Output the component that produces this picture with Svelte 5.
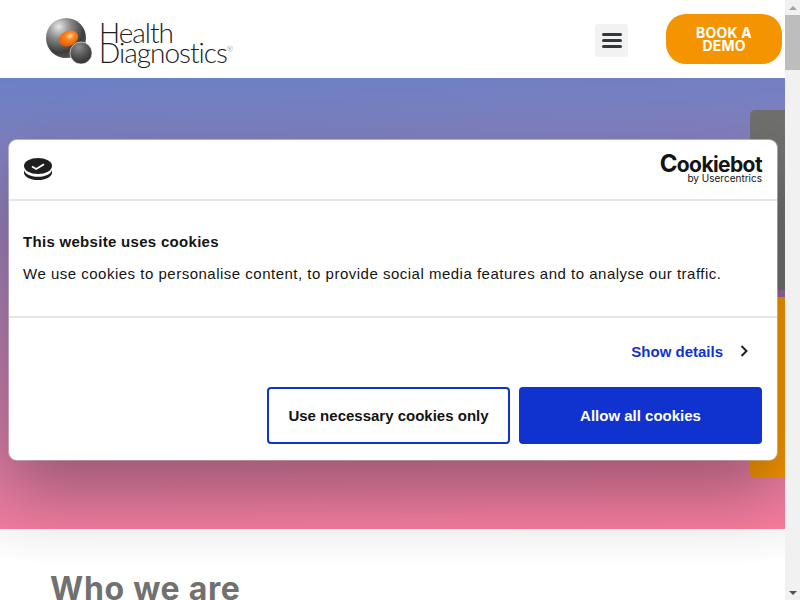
<script>
  let tabs = [
    { name: 'grey', height: 180 },
    { name: 'purple', height: 7 },
    { name: 'orange', height: 181 }
  ];
</script>

<div class="page">
  <div class="main">
    <header class="topbar">
      <a class="logo" href="#top">
        <svg class="orb" width="48" height="48" viewBox="0 0 48 48">
          <defs>
            <radialGradient id="big" cx="0.32" cy="0.22" r="0.85">
              <stop offset="0" stop-color="#e8e8e8" />
              <stop offset="0.35" stop-color="#8a8a8a" />
              <stop offset="0.75" stop-color="#3c3c3c" />
              <stop offset="1" stop-color="#5a5a5a" />
            </radialGradient>
            <radialGradient id="small" cx="0.4" cy="0.25" r="0.8">
              <stop offset="0" stop-color="#8c8c8c" />
              <stop offset="0.6" stop-color="#4c4c4c" />
              <stop offset="1" stop-color="#2e2e2e" />
            </radialGradient>
            <radialGradient id="eye" cx="0.62" cy="0.4" r="0.6">
              <stop offset="0" stop-color="#ffe6c8" />
              <stop offset="0.35" stop-color="#ff8a1e" />
              <stop offset="1" stop-color="#e85d05" />
            </radialGradient>
          </defs>
          <circle cx="20" cy="20" r="20" fill="url(#big)" />
          <ellipse cx="22.5" cy="20.5" rx="10" ry="7.5" transform="rotate(-25 22.5 20.5)" fill="url(#eye)" />
          <circle cx="35" cy="35" r="11" fill="url(#small)" stroke="#fff" stroke-width="0.6" />
        </svg>
        <span class="wordmark">
          <span>Health</span>
          <span>Diagnostics<sup>®</sup></span>
        </span>
      </a>
      <div class="actions">
        <button class="burger" aria-label="Menu">
          <svg width="20" height="15" viewBox="0 0 20 15">
            <rect y="0" width="20" height="3" rx="1.5" />
            <rect y="6" width="20" height="3" rx="1.5" />
            <rect y="12" width="20" height="3" rx="1.5" />
          </svg>
        </button>
        <a class="demo" href="#demo">BOOK A DEMO</a>
      </div>
    </header>

    <section class="hero">
      <div class="tabs">
        {#each tabs as tab}
          <div class="tab {tab.name}" style="height: {tab.height}px"></div>
        {/each}
      </div>
    </section>

    <section class="about">
      <h2>Who we are</h2>
    </section>

    <div class="dialog">
      <div class="dialog-head">
        <svg class="cb-mark" width="30" height="24" viewBox="0 0 30 24">
          <path d="M1 12.5v3.2C1 19.8 7.3 23 15 23s14-3.2 14-7.3v-3.2c0 4-6.3 7.3-14 7.3S1 16.500 1 12.500z" fill="#1f1f1f" />
          <ellipse cx="15" cy="9" rx="14" ry="8" fill="#1f1f1f" />
          <path d="M9 9.500l4.200 2.500 7.800-4.800" fill="none" stroke="#fff" stroke-width="1.800" />
        </svg>
        <div class="cb-logo">
          <span class="cb-name"><span class="cb-c">C</span>ookiebot</span>
          <span class="cb-by">by Usercentrics</span>
        </div>
      </div>

      <div class="dialog-body">
        <h3>This website uses cookies</h3>
        <p>We use cookies to personalise content, to provide social media features and to analyse our traffic.</p>
      </div>

      <div class="dialog-foot">
        <div class="details">
          <span>Show details</span>
          <svg width="8" height="12" viewBox="0 0 8 12">
            <path d="M1.500 1l5 5-5 5" fill="none" stroke="#1f1f1f" stroke-width="2" />
          </svg>
        </div>
        <div class="buttons">
          <button class="btn outline">Use necessary cookies only</button>
          <button class="btn solid">Allow all cookies</button>
        </div>
      </div>
    </div>
  </div>

  <div class="scrollbar">
    <div class="arrow up"></div>
    <div class="track"><div class="thumb"></div></div>
    <div class="arrow down"></div>
  </div>
</div>

<style>
  :global(body) {
    margin: 0;
    overflow: hidden;
  }

  .page {
    display: flex;
    width: 800px;
    height: 600px;
    overflow: hidden;
    background: #fff;
  }

  .main {
    position: relative;
    width: 785px;
    height: 600px;
    overflow: hidden;
    display: flex;
    flex-direction: column;
  }

  .topbar {
    height: 78px;
    flex: none;
    display: flex;
    align-items: center;
    justify-content: space-between;
    padding: 0 3px 0 46px;
    box-sizing: border-box;
    background: #fff;
  }

  .logo {
    display: flex;
    align-items: flex-start;
    gap: 7px;
    margin-top: 4px;
    color: #1e1e1e;
    text-decoration: none;
  }

  .orb {
    margin-top: 1px;
    margin-right: -2px;
  }

  .wordmark {
    display: flex;
    flex-direction: column;
    margin-top: 5px;
    font-family: "Lato", sans-serif;
    font-weight: 300;
    font-size: 28px;
    line-height: 20px;
    letter-spacing: -1px;
  }

  .wordmark sup {
    font-size: 7px;
    line-height: 0;
    vertical-align: 11px;
    letter-spacing: 0;
    color: #555;
  }

  .actions {
    display: flex;
    align-items: center;
    gap: 38px;
  }

  .burger {
    width: 33px;
    height: 33px;
    margin-top: 2px;
    padding: 0;
    border: 0;
    border-radius: 3px;
    background: #f2f2f3;
    display: flex;
    align-items: center;
    justify-content: center;
  }

  .burger svg {
    fill: #32373c;
  }

  .demo {
    width: 116px;
    height: 50px;
    box-sizing: border-box;
    padding: 0 20px;
    display: flex;
    align-items: center;
    justify-content: center;
    text-align: center;
    border-radius: 20px;
    background: #f49400;
    color: #fff;
    text-decoration: none;
    font-family: "Inter", sans-serif;
    font-weight: 700;
    font-size: 14px;
    line-height: 13px;
    letter-spacing: 0.2px;
  }

  .hero {
    position: relative;
    height: 451px;
    flex: none;
    background: linear-gradient(178deg, #6a80c4 0%, #f87c9c 100%);
  }

  .tabs {
    position: absolute;
    top: 32px;
    right: 0;
    width: 35px;
    display: flex;
    flex-direction: column;
  }

  .tab.grey {
    background: #6f6f6d;
    border-top-left-radius: 5px;
  }

  .tab.purple {
    background: #96699a;
  }

  .tab.orange {
    background: #f49400;
    border-bottom-left-radius: 5px;
  }

  .about {
    flex: 1;
    padding: 41px 50px 0;
    background: linear-gradient(#f8f8f8 0, #fff 36px);
  }

  h2 {
    margin: 0;
    font-family: "Inter", sans-serif;
    font-weight: 700;
    font-size: 32px;
    line-height: 38px;
    letter-spacing: 0.7px;
    color: #71716f;
  }

  .dialog {
    position: absolute;
    left: 9px;
    top: 140px;
    width: 768px;
    height: 320px;
    box-sizing: border-box;
    background: #fff;
    border-radius: 8px;
    box-shadow: 0 32px 68px rgba(0, 0, 0, 0.3), 0 0 0 1px rgba(255, 255, 255, 0.45);
    font-family: "Liberation Sans", sans-serif;
    color: #141414;
    display: flex;
    flex-direction: column;
  }

  .dialog-head {
    height: 61px;
    flex: none;
    box-sizing: border-box;
    padding: 0 15px 0 14px;
    border-bottom: 2px solid #e6e6e6;
    display: flex;
    align-items: center;
    justify-content: space-between;
  }

  .cb-mark {
    margin-top: -2px;
  }

  .cb-logo {
    display: flex;
    flex-direction: column;
    align-items: flex-end;
    margin-top: -2px;
    font-family: "Inter", sans-serif;
    color: #141414;
  }

  .cb-name {
    font-weight: 700;
    font-size: 21px;
    line-height: 20px;
    letter-spacing: -0.6px;
  }

  .cb-c {
    font-size: 24px;
    line-height: 20px;
  }

  .cb-by {
    margin-top: -3px;
    font-size: 10px;
    line-height: 12px;
  }

  .dialog-body {
    height: 117px;
    flex: none;
    box-sizing: border-box;
    padding: 32px 14px 0;
    border-bottom: 2px solid #e6e6e6;
  }

  h3 {
    margin: 0 0 13px;
    font-size: 15px;
    line-height: 18px;
    font-weight: 700;
    letter-spacing: 0.3px;
  }

  p {
    margin: 0;
    font-size: 15px;
    line-height: 20px;
    letter-spacing: 0.5px;
  }

  .dialog-foot {
    flex: 1;
    padding: 0 15px 0 14px;
    display: flex;
    flex-direction: column;
  }

  .details {
    height: 66px;
    margin-bottom: 3px;
    flex: none;
    display: flex;
    align-items: center;
    justify-content: flex-end;
    gap: 17px;
    padding-right: 14px;
    color: #1032cf;
    font-weight: 700;
    font-size: 15px;
  }

  .buttons {
    display: flex;
    justify-content: flex-end;
    gap: 9px;
  }

  .btn {
    height: 57px;
    width: 243px;
    box-sizing: border-box;
    border-radius: 4px;
    font-family: "Liberation Sans", sans-serif;
    font-weight: 700;
    font-size: 15px;
  }

  .btn.outline {
    background: #fff;
    border: 2px solid #1032cf;
    color: #141414;
  }

  .btn.solid {
    background: #1032cf;
    border: 2px solid #1032cf;
    color: #fff;
  }

  .scrollbar {
    width: 15px;
    height: 600px;
    flex: none;
    background: #f1f1f1;
    display: flex;
    flex-direction: column;
    align-items: center;
  }

  .arrow {
    height: 15px;
    flex: none;
    width: 15px;
    display: flex;
    align-items: center;
    justify-content: center;
  }

  .arrow::before {
    content: "";
    border-left: 4px solid transparent;
    border-right: 4px solid transparent;
  }

  .arrow.up::before {
    border-bottom: 4px solid #a3a3a3;
  }

  .arrow.down::before {
    border-top: 4px solid #505050;
  }

  .track {
    flex: 1;
    width: 15px;
  }

  .thumb {
    height: 55px;
    background: #bdbdbd;
  }
</style>
